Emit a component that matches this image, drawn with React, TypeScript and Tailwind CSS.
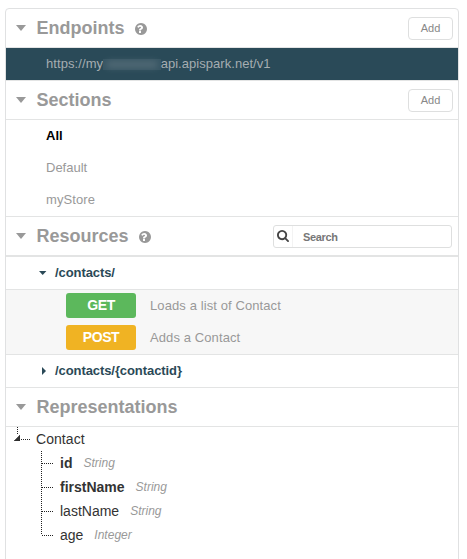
import type { ReactNode } from "react";

function HelpIcon() {
  return (
    <svg className="mt-px ml-2.5 size-3 shrink-0" viewBox="128 128 1536 1536" fill="currentColor">
      <path d="M896 1376v-192q0-14-9-23t-23-9h-192q-14 0-23 9t-9 23v192q0 14 9 23t23 9h192q14 0 23-9t9-23zm256-672q0-88-55.5-163t-138.5-116-170-41q-243 0-371 213-15 24 8 42l132 100q7 6 19 6 16 0 25-12 53-68 86-92 34-24 86-24 48 0 85.5 26t37.5 59q0 38-20 61t-68 45q-63 28-115.5 86.5t-52.5 125.5v36q0 14 9 23t23 9h192q14 0 23-9t9-23q0-19 21.5-49.5t54.5-49.5q32-18 49-28.5t46-35 44.5-48 28-60.5 12.5-81zm512 192q0 209-103 385.5t-279.5 279.5-385.5 103-385.5-103-279.5-279.5-103-385.5 103-385.5 279.5-279.5 385.5-103 385.5 103 279.5 279.5 103 385.5z" />
    </svg>
  );
}

function SearchIcon() {
  return (
    <svg className="mb-px size-3 text-[#444]" viewBox="64 128 1664 1664" fill="currentColor">
      <path d="M1216 832q0-185-131.5-316.5t-316.5-131.5-316.5 131.5-131.5 316.5 131.5 316.5 316.5 131.5 316.5-131.5 131.5-316.5zm512 832q0 52-38 90t-90 38q-54 0-90-38l-343-342q-179 124-399 124-143 0-273.5-55.5t-225-150-150-225-55.5-273.5 55.5-273.5 150-225 225-150 273.5-55.5 273.5 55.5 225 150 150 225 55.5 273.5q0 220-124 399l343 343q37 37 37 90z" />
    </svg>
  );
}

function Header({ title, help, last, children }: { title: string; help?: boolean; last?: boolean; children?: ReactNode }) {
  return (
    <div className={`flex items-center border-[#e3e4e4] pl-2.5 text-[#999] ${last ? "h-10 border-b-2" : "h-[39px] border-b"}`}>
      <svg className="h-1.5 w-2.5 shrink-0" viewBox="0 0 10 6" fill="currentColor">
        <path d="M0 0h10L5 6z" />
      </svg>
      <h2 className="ml-[10.5px] text-[18px] leading-5 font-bold">{title}</h2>
      {help && <HelpIcon />}
      {children}
    </div>
  );
}

function AddButton() {
  return (
    <button className="mt-px mr-[5px] ml-auto h-[23px] w-[45px] rounded border border-[#dedfdf] text-[11px] leading-[21px] text-[#888]">
      Add
    </button>
  );
}

function PathRow({ path, open }: { path: string; open?: boolean }) {
  return (
    <div className="flex h-[33px] items-center border-b border-[#e3e4e4] pl-[33px] text-[13px] font-bold text-[#2a4957]">
      <svg className="size-2" viewBox="0 0 8 8" fill="currentColor">
        <path d={open ? "M0 2h7.4L3.7 6z" : "M3 0v8l4-4z"} />
      </svg>
      <span className="ml-2 tracking-[-0.08px]">{path}</span>
    </div>
  );
}

function Method({ name, color, text }: { name: string; color: string; text: string }) {
  return (
    <div className="flex h-8 items-center pl-[60px]">
      <span className={`mb-px h-[25px] w-[70px] rounded-[3px] text-center text-[14px] leading-[25px] font-bold tracking-[-0.4px] text-white ${color}`}>{name}</span>
      <span className="ml-3.5 text-[13px] tracking-[0.1px] text-[#999]">{text}</span>
    </div>
  );
}

const dotsDown = "bg-[repeating-linear-gradient(180deg,#222_0_1px,transparent_1px_2px)]";
const dotsAcross = "bg-[repeating-linear-gradient(90deg,#222_0_1px,transparent_1px_2px)]";

const fields = [
  { name: "id", type: "String", bold: true },
  { name: "firstName", type: "String", bold: true },
  { name: "lastName", type: "String", bold: false },
  { name: "age", type: "Integer", bold: false },
];

export default function App() {
  return (
    <div className="h-[559px] w-[467px] overflow-hidden bg-white pt-2 pl-[5px] font-['Liberation_Sans',Arial,sans-serif]">
      <div className="h-[570px] w-[454px] rounded-t border border-[#e0e1e2]">
        <Header title="Endpoints" help>
          <AddButton />
        </Header>
        <div className="flex h-[33px] items-center border-b border-[#e3e4e4] bg-[#2a4a58] bg-clip-padding pl-10 text-[13px] text-[#a5adb1]">
          <span className="tracking-[0.08px]">https://my</span>
          <span className="flex h-[11px] w-[57.5px] items-center justify-center bg-[#375563]">
            <span className="h-[7px] w-[50px] bg-[#778890] opacity-40 blur-[3px]" />
          </span>
          <span className="tracking-[0.04px]">api.apispark.net/v1</span>
        </div>
        <Header title="Sections">
          <AddButton />
        </Header>
        <ul className="h-[97px] border-b border-[#e3e4e4] pl-10 text-[13px] leading-8 text-[#999]">
          <li className="font-bold text-black">All</li>
          <li>Default</li>
          <li className="tracking-[0.1px]">myStore</li>
        </ul>
        <Header title="Resources" help last>
          <div className="mt-px mr-1.5 ml-auto flex h-[23px] w-[179px] items-center rounded-[3px] border border-[#dedfdf]">
            <span className="flex h-full w-[19px] items-center border-r border-[#f3f3f3] pl-[3px]">
              <SearchIcon />
            </span>
            <span className="mt-px ml-2.5 text-[11px] font-bold tracking-[-0.35px] text-[#777]">Search</span>
          </div>
        </Header>
        <PathRow path="/contacts/" open />
        <div className="h-[65px] border-b border-[#e3e4e4] bg-[#f7f7f7]">
          <Method name="GET" color="bg-[#5cb85c]" text="Loads a list of Contact" />
          <Method name="POST" color="bg-[#f0b323]" text="Adds a Contact" />
        </div>
        <PathRow path="/contacts/{contactid}" />
        <Header title="Representations" />
        <div className="text-[14px] leading-6 text-[#333]">
          <div className="flex h-6">
            <div className="ml-2 flex w-4 flex-col">
              <div className={`ml-[3px] h-2 w-px ${dotsDown}`} />
              <div className="flex">
                <svg className="h-1.5 w-1.5" viewBox="0 0 6 6">
                  <path d="M6 0v6H0z" fill="#333" stroke="#222" strokeWidth="0.5" />
                </svg>
                <div className={`mt-1 ml-px h-px w-[9px] ${dotsAcross}`} />
              </div>
            </div>
            <span className="ml-1.5 tracking-[0.06px]">Contact</span>
          </div>
          {fields.map((f, i) => (
            <div key={f.name} className="flex h-6 pl-[35px]">
              <div className={`w-px ${dotsDown} ${i === 3 ? "h-3" : "h-6"}`} />
              <div className={`mt-3 h-px w-3 ${dotsAcross}`} />
              <span className={`ml-1.5 ${f.bold ? "font-bold" : ""}`}>{f.name}</span>
              <span className="ml-[11px] text-[12px] text-[#999] italic">{f.type}</span>
            </div>
          ))}
        </div>
      </div>
    </div>
  );
}
